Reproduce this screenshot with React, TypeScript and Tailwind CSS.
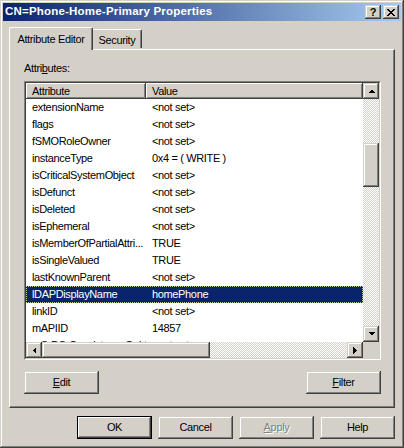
import React from "react";

const raised =
  "shadow-[inset_-1px_-1px_0_#404040,inset_1px_1px_0_#ffffff,inset_-2px_-2px_0_#808080]";
const sbRaised =
  "shadow-[inset_-1px_-1px_0_#404040,inset_1px_1px_0_#d4d0c8,inset_-2px_-2px_0_#808080,inset_2px_2px_0_#ffffff]";
const dither =
  "bg-[repeating-conic-gradient(#d4d0c8_0%_25%,#ffffff_0%_50%)] bg-[length:2px_2px]";

function Arrow({ dir }: { dir: "up" | "down" | "left" | "right" }) {
  const pts: Record<string, string> = {
    up: "0,4 7,4 3.5,0.5",
    down: "0,0 7,0 3.5,3.5",
    left: "4,0 4,7 0.5,3.5",
    right: "0,0 0,7 3.5,3.5",
  };
  const vertical = dir === "up" || dir === "down";
  return (
    <svg
      width={vertical ? 7 : 4}
      height={vertical ? 4 : 7}
      viewBox={vertical ? "0 0 7 4" : "0 0 4 7"}
      shapeRendering="crispEdges"
    >
      <polygon points={pts[dir]} fill="#000" />
    </svg>
  );
}

function SbButton({ dir }: { dir: "up" | "down" | "left" | "right" }) {
  return (
    <div
      className={`w-[16px] h-[16px] shrink-0 bg-[#d4d0c8] flex items-center justify-center ${sbRaised}`}
    >
      <Arrow dir={dir} />
    </div>
  );
}

function Btn({
  children,
  def,
  disabled,
}: {
  children: React.ReactNode;
  def?: boolean;
  disabled?: boolean;
}) {
  if (def) {
    return (
      <div className="w-[75px] h-[23px] border border-black">
        <div
          className={`w-full h-full bg-[#d4d0c8] flex items-center justify-center ${raised}`}
        >
          {children}
        </div>
      </div>
    );
  }
  return (
    <div
      className={`w-[75px] h-[23px] bg-[#d4d0c8] flex items-center justify-center ${sbRaised} ${
        disabled ? "text-[#808080] [text-shadow:1px_1px_0_#ffffff]" : ""
      }`}
    >
      {children}
    </div>
  );
}

const rows: [string, string][] = [
  ["extensionName", "<not set>"],
  ["flags", "<not set>"],
  ["fSMORoleOwner", "<not set>"],
  ["instanceType", "0x4 = ( WRITE )"],
  ["isCriticalSystemObject", "<not set>"],
  ["isDefunct", "<not set>"],
  ["isDeleted", "<not set>"],
  ["isEphemeral", "<not set>"],
  ["isMemberOfPartialAttri...", "TRUE"],
  ["isSingleValued", "TRUE"],
  ["lastKnownParent", "<not set>"],
  ["lDAPDisplayName", "homePhone"],
  ["linkID", "<not set>"],
  ["mAPIID", "14857"],
  ["mS-DS-ConsistencyGuid", "<not set>"],
];

export default function App() {
  return (
    <div className="w-[404px] h-[448px] bg-[#d4d0c8] font-['Liberation_Sans',Arial,sans-serif] text-[11px] text-black tracking-[-0.35px] leading-none select-none">
      <div className="w-full h-full p-[3px] flex flex-col shadow-[inset_-1px_-1px_0_#404040,inset_1px_1px_0_#d4d0c8,inset_-2px_-2px_0_#808080,inset_2px_2px_0_#ffffff]">
        {/* Title bar */}
        <div className="h-[18px] shrink-0 flex items-center justify-between bg-[linear-gradient(to_right,#0a246a,#a6caf0)] pl-[2px] pr-[2px]">
          <span className="text-white font-bold text-[11.5px] tracking-[0.2px]">
            CN=Phone-Home-Primary Properties
          </span>
          <div className="flex gap-[2px]">
            <div
              className={`w-[16px] h-[14px] bg-[#d4d0c8] flex items-center justify-center font-bold text-[11px] tracking-normal ${sbRaised}`}
            >
              <span className="mt-[1px]">?</span>
            </div>
            <div
              className={`w-[16px] h-[14px] bg-[#d4d0c8] flex items-center justify-center ${sbRaised}`}
            >
              <svg width="8" height="7" viewBox="0 0 8 7" shapeRendering="crispEdges">
                <path
                  d="M0 0h2v1h-2zM6 0h2v1h-2zM1 1h2v1h-2zM5 1h2v1h-2zM2 2h4v1h-4zM3 3h2v1h-2zM2 4h4v1h-4zM1 5h2v1h-2zM5 5h2v1h-2zM0 6h2v1h-2zM6 6h2v1h-2z"
                  fill="#000"
                />
              </svg>
            </div>
          </div>
        </div>

        {/* Body */}
        <div className="flex-1 flex flex-col px-[6px]">
          {/* Tabs */}
          <div className="mt-[6px] h-[22px] flex items-end relative z-10">
            <div className="w-[84px] h-[23px] -mb-[1px] bg-[#d4d0c8] border-l border-t border-white rounded-tl-[2px] rounded-tr-[2px] shadow-[inset_-1px_0_0_#808080] border-r border-r-[#404040] flex items-center justify-center">
              <span className="mt-[1px]">Attribute Editor</span>
            </div>
            <div className="w-[49px] h-[19px] mb-[1px] bg-[#d4d0c8] border-t border-white rounded-tr-[2px] border-r border-r-[#404040] shadow-[inset_-1px_0_0_#808080] flex items-center justify-center">
              <span className="mt-[2px]">Security</span>
            </div>
          </div>

          {/* Panel */}
          <div className="h-[359px] border-l border-t border-white border-r border-b border-r-[#404040] border-b-[#404040] shadow-[inset_-1px_-1px_0_#808080] flex flex-col px-[14px] pt-[12px]">
            <div className="h-[13px] leading-[13px]">
              Attri<span className="underline">b</span>utes:
            </div>
            <div className="mt-[6px] w-[357px] h-[279px] border border-t-[#808080] border-l-[#808080] border-b-white border-r-white">
              <div className="w-full h-full border border-t-[#404040] border-l-[#404040] border-b-[#d4d0c8] border-r-[#d4d0c8] flex flex-col bg-white">
                <div className="h-[259px] flex">
                  {/* List content */}
                  <div className="w-[337px] h-full overflow-hidden flex flex-col">
                    <div className="h-[16px] shrink-0 flex bg-[#d4d0c8]">
                      <div className={`w-[120px] h-full flex items-center pl-[6px] ${raised}`}>
                        Attribute
                      </div>
                      <div className={`flex-1 h-full flex items-center pl-[6px] ${raised}`}>
                        Value
                      </div>
                    </div>
                    {rows.map(([a, v]) => {
                      const sel = a === "lDAPDisplayName";
                      return (
                        <div
                          key={a}
                          className={`h-[17px] shrink-0 flex items-center ${
                            sel
                              ? "bg-[#0a246a] text-white outline-1 outline-dotted outline-[#c8c8a0] -outline-offset-1"
                              : ""
                          }`}
                        >
                          <div className="w-[120px] pl-[6px] whitespace-nowrap overflow-hidden">
                            {a}
                          </div>
                          <div className="flex-1 pl-[6px] whitespace-nowrap">{v}</div>
                        </div>
                      );
                    })}
                  </div>
                  {/* Vertical scrollbar */}
                  <div className="w-[16px] h-full flex flex-col">
                    <SbButton dir="up" />
                    <div className={`flex-1 flex flex-col ${dither}`}>
                      <div className="h-[44px]" />
                      <div className={`h-[44px] bg-[#d4d0c8] ${sbRaised}`} />
                    </div>
                    <SbButton dir="down" />
                  </div>
                </div>
                {/* Horizontal scrollbar */}
                <div className="h-[16px] flex">
                  <div className="w-[337px] h-full flex">
                    <SbButton dir="left" />
                    <div className={`flex-1 flex ${dither}`}>
                      <div className={`w-[168px] h-full bg-[#d4d0c8] ${sbRaised}`} />
                    </div>
                    <SbButton dir="right" />
                  </div>
                  <div className="w-[16px] h-full bg-[#d4d0c8]" />
                </div>
              </div>
            </div>
            <div className="mt-[11px] w-[357px] flex justify-between">
              <Btn>
                <span className="underline">E</span>dit
              </Btn>
              <Btn>
                <span className="underline">F</span>ilter
              </Btn>
            </div>
          </div>

          {/* Bottom buttons */}
          <div className="mt-[8px] flex justify-end gap-[6px]">
            <Btn def>OK</Btn>
            <Btn>Cancel</Btn>
            <Btn disabled>
              <span className="underline">A</span>pply
            </Btn>
            <Btn>Help</Btn>
          </div>
        </div>
      </div>
    </div>
  );
}
